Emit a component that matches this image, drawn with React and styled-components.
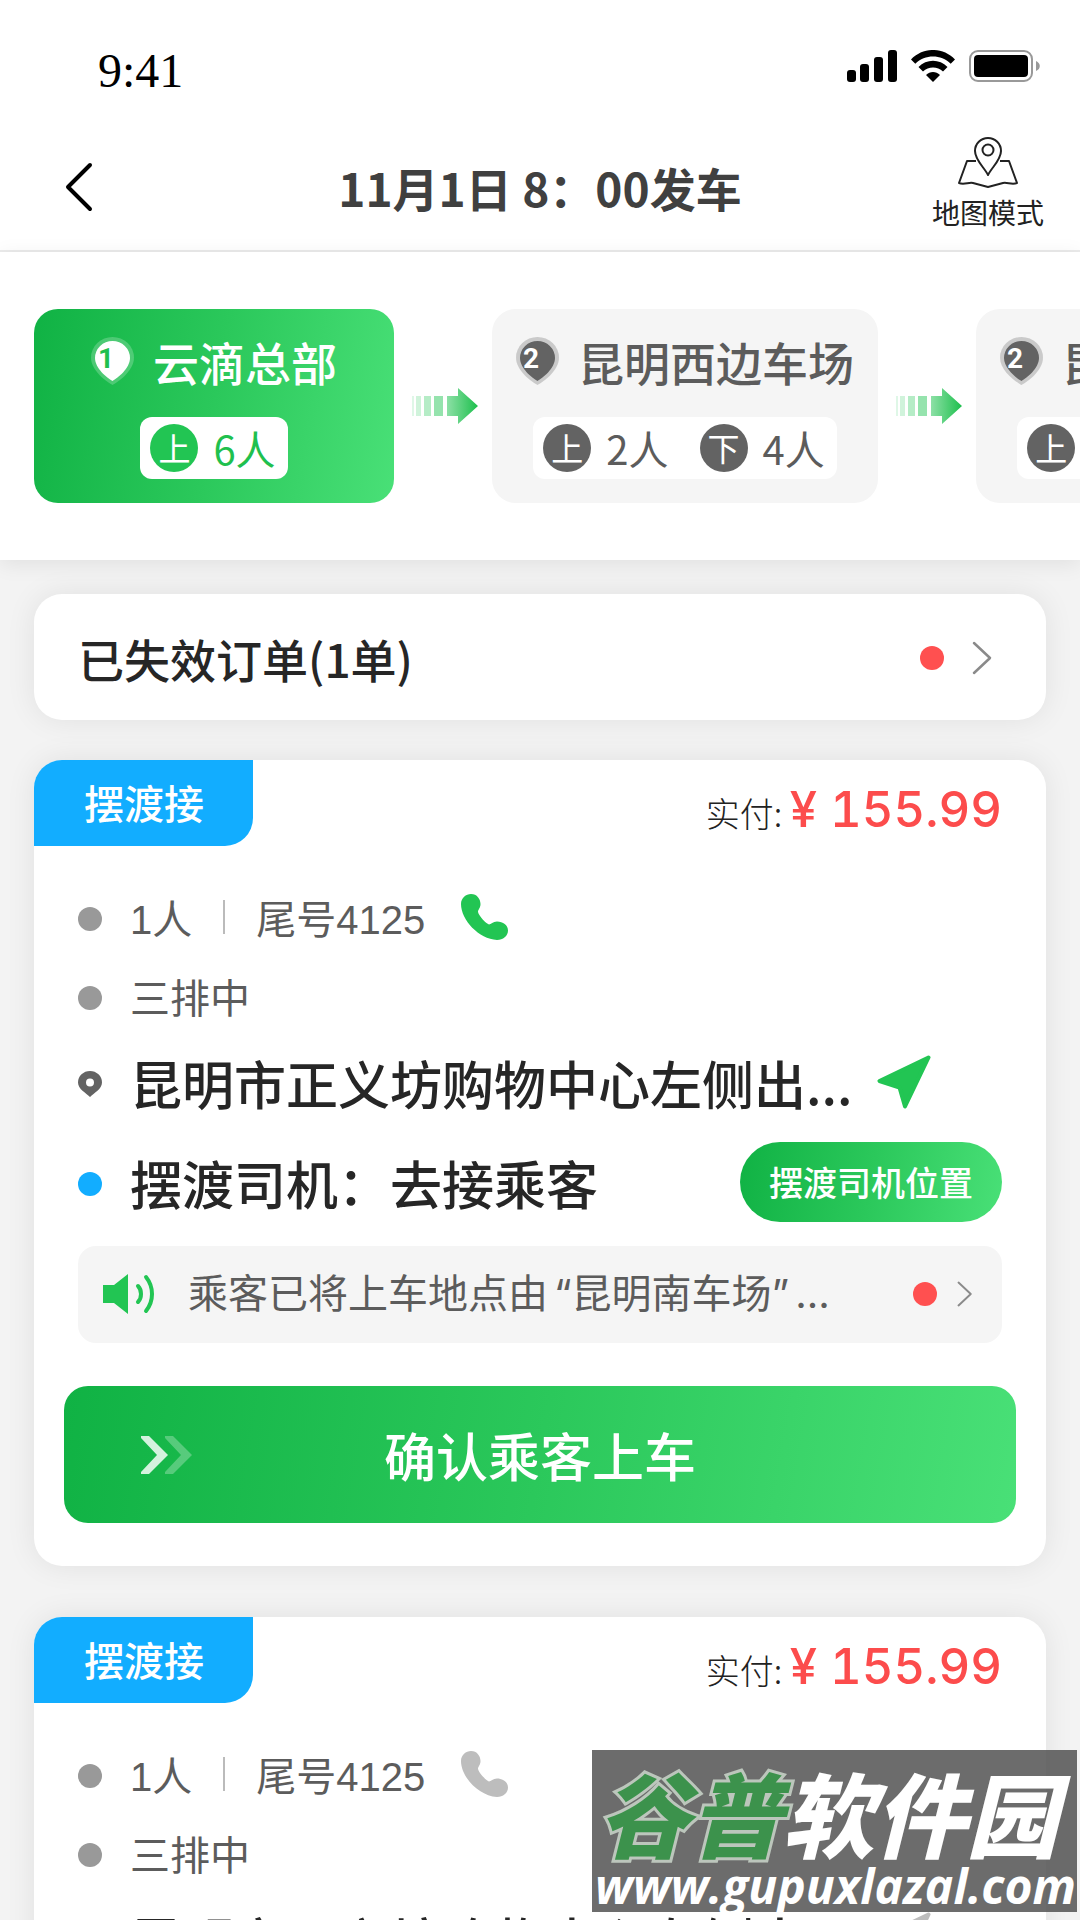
import React from "react";
import styled, { createGlobalStyle } from "styled-components";

const stops = [
  { no: 1, name: "云滴总部", active: true, counts: [["上", "6人"]] },
  { no: 2, name: "昆明西边车场", counts: [["上", "2人"], ["下", "4人"]] },
  { no: 2, name: "昆明西边车场", counts: [["上", "2人"], ["下", "4人"]] },
];

const orders = [
  { id: 1, callable: true },
  { id: 2, callable: false },
];

const SignalIcon = () => (
  <svg width="50" height="32" viewBox="0 0 50 32">
    <rect x="0" y="20" width="9" height="12" rx="3" />
    <rect x="13" y="14" width="9" height="18" rx="3" />
    <rect x="27" y="7" width="9" height="25" rx="3" />
    <rect x="41" y="0" width="9" height="32" rx="3" />
  </svg>
);

const WifiIcon = () => (
  <svg width="44" height="32" viewBox="0 0 44 32">
    <path d="M0 9.5C12-3.2 32-3.2 44 9.5L39.7 13.8C30 4.2 14 4.2 4.3 13.8Z" />
    <path d="M7.5 17C15.5 8.8 28.5 8.8 36.5 17L32 21.6C26.5 16 17.5 16 12 21.6Z" />
    <path d="M15 25C19 21 25 21 29 25L22 32Z" />
  </svg>
);

const BatteryIcon = () => (
  <svg width="71" height="32" viewBox="0 0 71 32">
    <rect x="1" y="1" width="62" height="30" rx="8" fill="none" stroke="#999" strokeWidth="2" />
    <rect x="5" y="5" width="54" height="22" rx="4" />
    <path d="M67 11C72 13 72 19 67 21Z" fill="#999" />
  </svg>
);

const BackIcon = () => (
  <svg width="28" height="50" viewBox="0 0 28 50" fill="none" stroke="#000" strokeWidth="4" strokeLinecap="round" strokeLinejoin="round">
    <path d="M25 3L3 25L25 47" />
  </svg>
);

const MapIcon = () => (
  <svg width="60" height="52" viewBox="0 0 60 52" fill="none" stroke="#222" strokeWidth="2" strokeLinejoin="round">
    <path d="M18 24H9L1 46C6 48 11 45 15 46L30 50L45 46C49 45 54 48 59 46L51 24H42" />
    <path d="M30 38C26 30 17 23 17 14A13 13 0 0 1 43 14C43 23 34 30 30 38Z" />
    <circle cx="30" cy="13" r="5.5" />
  </svg>
);

const StopPin = ({ no, active }) => (
  <svg width="43" height="48" viewBox="0 0 43 48">
    <path
      d="M21.500 48C16 45 0 34 0 20.500A21.500 20.500 0 0 1 43 20.500C43 34 27 45 21.500 48Z"
      fill={active ? "#fff" : "#666"}
      opacity={active ? 0.22 : 0.3}
    />
    <path
      d="M21.500 44C16 41 4 31 4 21A17.500 17 0 0 1 39 21C39 31 27 41 21.500 44Z"
      fill={active ? "#fff" : "#636363"}
    />
    <text x="7" y="31" fontFamily="Roboto, sans-serif" fontSize="28" fontWeight="700" fill={active ? "#1fc04e" : "#fff"}>
      {no}
    </text>
  </svg>
);

const NextArrow = () => (
  <svg width="70" height="36" viewBox="-4 0 70 36">
    <defs>
      <linearGradient id="next-fade">
        <stop offset="0" stopColor="#8de0a6" />
        <stop offset="1" stopColor="#1cbf4c" />
      </linearGradient>
    </defs>
    <g fill="#2bc85b">
      <rect x="0" y="8" width="2" height="20" opacity="0.15" />
      <rect x="4" y="8" width="5" height="20" opacity="0.22" />
      <rect x="12" y="8" width="7" height="20" opacity="0.35" />
      <rect x="22" y="8" width="9" height="20" opacity="0.5" />
    </g>
    <path d="M35 8H46V0L66 18L46 36V28H35Z" fill="url(#next-fade)" />
  </svg>
);

const ChevronRight = ({ h = 34 }) => (
  <svg height={h} viewBox="0 0 20 34" fill="none" stroke="#8a8a8a" strokeWidth="2.500" strokeLinecap="round" strokeLinejoin="round">
    <path d="M2 2L18 17L2 32" />
  </svg>
);

const PhoneIcon = ({ color }) => (
  <svg width="47" height="46" viewBox="0 0 47 46">
    <path
      fill={color}
      d="M0 10C0 4 5 0 10 0C16 0 19.500 5 19.500 10C19.500 14 17 15.500 17 18C18 22 25 29.500 28 30.500C30 30.500 32 27.500 36 27.500C42 27.500 47 31 47 36.500C47 42 42 46 36 46C18 45 0 26 0 10Z"
    />
  </svg>
);

const SmallPin = () => (
  <svg width="24" height="26" viewBox="0 0 24 26">
    <path
      fill="#636363"
      fillRule="evenodd"
      d="M12 26C8 22 0 18 0 11.500A12 11.500 0 0 1 24 11.500C24 18 16 22 12 26ZM12 7.500A4 4 0 1 0 12 15.500A4 4 0 1 0 12 7.500Z"
    />
  </svg>
);

const NavIcon = ({ color }) => (
  <svg width="54" height="54" viewBox="0 0 54 54">
    <path d="M51.500 2.500L2.500 26L22.500 32.500L28 51.500Z" fill={color} stroke={color} strokeWidth="4" strokeLinejoin="round" />
  </svg>
);

const SpeakerIcon = () => (
  <svg width="54" height="40" viewBox="0 0 54 40" fill="none" stroke="#22c553" strokeLinecap="round">
    <path d="M1 11H12L26 0V40L12 29H1Z" fill="#22c553" stroke="none" />
    <path d="M36 12C40 16 40 24 36 28" strokeWidth="4" />
    <path d="M44 3C52 13 52 27 44 37" strokeWidth="4" />
  </svg>
);

const DoubleChevron = () => (
  <svg width="52" height="38" viewBox="0 0 52 38" fill="#fff">
    <path opacity="0.82" d="M0 0H8L27 19L8 38H0V36L16 19L0 2Z" />
    <path opacity="0.28" d="M24 0H32L51 19L32 38H24V36L40 19L24 2Z" />
  </svg>
);

const Stop = ({ stop }) => (
  <StopCard $active={stop.active}>
    <StopTitle>
      <StopPin no={stop.no} active={stop.active} />
      {stop.name}
    </StopTitle>
    <Counts $active={stop.active}>
      {stop.counts.map(([kind, count]) => (
        <Count key={kind}>
          <Kind $active={stop.active}>{kind}</Kind>
          {count}
        </Count>
      ))}
    </Counts>
  </StopCard>
);

const Order = ({ callable }) => {
  const tint = callable ? "#22c553" : "#bdbdbd";
  return (
    <Card as="article">
      <OrderHead>
        <Tag>摆渡接</Tag>
        <Paid>
          实付: <Price>¥ 155.99</Price>
        </Paid>
      </OrderHead>
      <Rows>
        <Row $h={78}>
          <Marker><Dot $color="#999" /></Marker>
          1人
          <Divider />
          尾号4125
          <IconButton $gap={36} aria-label="拨打电话" disabled={!callable}>
            <PhoneIcon color={tint} />
          </IconButton>
        </Row>
        <Row $h={80}>
          <Marker><Dot $color="#999" /></Marker>
          三排中
        </Row>
        <PlaceRow $h={92}>
          <Marker><SmallPin /></Marker>
          昆明市正义坊购物中心左侧出...
          <IconButton $gap={24} aria-label="导航" disabled={!callable}>
            <NavIcon color={tint} />
          </IconButton>
        </PlaceRow>
        <PlaceRow $h={108}>
          <Marker><Dot $color="#12adff" /></Marker>
          摆渡司机：去接乘客
          <DriverButton>摆渡司机位置</DriverButton>
        </PlaceRow>
        <Notice href="#notice">
          <SpeakerIcon />
          <NoticeText>
            乘客已将上车地点由<Quoted>“昆明南车场”</Quoted>...
          </NoticeText>
          <Dot $color="#ff5050" />
          <ChevronRight h={26} />
        </Notice>
      </Rows>
      <ConfirmButton>
        <DoubleChevron />
        <span>确认乘客上车</span>
      </ConfirmButton>
    </Card>
  );
};

const App = () => (
  <Screen>
    <GlobalStyle />
    <StatusBar>
      <Clock>9:41</Clock>
      <StatusIcons>
        <SignalIcon />
        <WifiIcon />
        <BatteryIcon />
      </StatusIcons>
    </StatusBar>
    <NavBar>
      <BackButton aria-label="返回">
        <BackIcon />
      </BackButton>
      <Title>11月1日 8：00发车</Title>
      <MapButton>
        <MapIcon />
        地图模式
      </MapButton>
    </NavBar>
    <Stops>
      {stops.map((stop, i) => (
        <React.Fragment key={i}>
          {i > 0 && <NextArrow />}
          <Stop stop={stop} />
        </React.Fragment>
      ))}
    </Stops>
    <Content>
      <Expired href="#expired">
        <ExpiredText>已失效订单(1单)</ExpiredText>
        <Dot $color="#ff5050" />
        <ChevronRight />
      </Expired>
      <OrderList>
        {orders.map((o) => (
          <Order key={o.id} callable={o.callable} />
        ))}
      </OrderList>
    </Content>
    <Watermark>
      <Brand>
        <em>谷普</em>软件园
      </Brand>
      <Site>www.gupuxlazal.com</Site>
    </Watermark>
  </Screen>
);

const GlobalStyle = createGlobalStyle`
  * {
    box-sizing: border-box;
  }

  body {
    margin: 0;
    font-family: "Noto Sans CJK SC", sans-serif;
    background: #f3f3f3;
  }

  button {
    padding: 0;
    border: none;
    background: none;
    font-family: inherit;
    color: inherit;
  }

  a {
    color: inherit;
    text-decoration: none;
  }

  svg {
    display: block;
    flex: none;
  }
`;

const green = "linear-gradient(100deg, #10b244 0%, #2bc85b 50%, #49e077 100%)";

const Screen = styled.div`
  position: relative;
  display: flex;
  flex-direction: column;
  height: 100vh;
  overflow: hidden;
`;

const StatusBar = styled.div`
  display: flex;
  flex: none;
  justify-content: space-between;
  align-items: flex-start;
  height: 124px;
  padding: 50px 40px 0 98px;
  background: #fff;
`;

const Clock = styled.time`
  font-family: "Liberation Serif", serif;
  font-size: 48px;
  line-height: 42px;
  color: #000;
`;

const StatusIcons = styled.div`
  display: flex;
  gap: 14px;
`;

const NavBar = styled.header`
  display: grid;
  flex: none;
  grid-template-columns: 1fr auto 1fr;
  align-items: center;
  height: 128px;
  padding: 0 36px;
  background: #fff;
  border-bottom: 2px solid #ebebeb;
`;

const BackButton = styled.button`
  justify-self: start;
  padding-left: 29px;
`;

const Title = styled.h1`
  margin: 0;
  font-size: 46px;
  font-weight: 700;
  line-height: 60px;
  color: #404040;
`;

const MapButton = styled.button`
  display: flex;
  flex-direction: column;
  align-items: center;
  justify-self: end;
  gap: 3px;
  padding-bottom: 6px;
  font-size: 28px;
  line-height: 40px;
  color: #222;
`;

const Stops = styled.section`
  display: flex;
  flex: none;
  align-items: center;
  gap: 14px;
  padding: 57px 34px;
  overflow: hidden;
  background: #fff;
  box-shadow: 0 4px 20px rgba(0, 0, 0, 0.08);
`;

const StopCard = styled.div`
  display: flex;
  flex: none;
  flex-direction: column;
  align-items: center;
  gap: 24px;
  min-width: 360px;
  padding: 20px 24px 24px;
  border-radius: 24px;
  background: ${(p) => (p.$active ? green : "#f5f5f5")};
  color: ${(p) => (p.$active ? "#fff" : "#5c5c5c")};
`;

const StopTitle = styled.div`
  display: flex;
  align-items: center;
  gap: 19px;
  font-size: 46px;
  font-weight: 500;
  line-height: 64px;
`;

const Counts = styled.div`
  display: flex;
  gap: 31px;
  padding: 7px 12px 7px 10px;
  border-radius: 12px;
  background: #fff;
  color: ${(p) => (p.$active ? "#1fc04e" : "#5c5c5c")};
`;

const Count = styled.div`
  display: flex;
  align-items: center;
  gap: 15px;
  font-size: 40px;
  line-height: 48px;
`;

const Kind = styled.span`
  width: 48px;
  height: 48px;
  border-radius: 50%;
  background: ${(p) => (p.$active ? "#22c553" : "#636363")};
  color: #fff;
  font-size: 32px;
  line-height: 46px;
  text-align: center;
`;

const Content = styled.main`
  flex: 1;
  min-height: 0;
  padding: 34px 34px 0;
`;

const Card = styled.div`
  border-radius: 28px;
  background: #fff;
  box-shadow: 0 0 30px rgba(0, 0, 0, 0.08);
`;

const Dot = styled.i`
  flex: none;
  width: 24px;
  height: 24px;
  border-radius: 50%;
  background: ${(p) => p.$color};
`;

const Expired = styled(Card).attrs({ as: "a" })`
  display: flex;
  align-items: center;
  gap: 28px;
  margin-bottom: 40px;
  padding: 32px 54px 30px 44px;
`;

const ExpiredText = styled.span`
  flex: 1;
  font-size: 46px;
  font-weight: 500;
  line-height: 64px;
  color: #262626;
`;

const OrderList = styled.div`
  display: flex;
  flex-direction: column;
  gap: 51px;
`;

const OrderHead = styled.div`
  display: flex;
  justify-content: space-between;
`;

const Tag = styled.span`
  padding: 12px 49px 14px 50px;
  border-radius: 28px 0;
  background: #12adff;
  color: #fff;
  font-size: 40px;
  font-weight: 500;
  line-height: 60px;
`;

const Paid = styled.div`
  padding: 20px 44px 0 0;
  font-size: 34px;
  font-weight: 300;
  line-height: 60px;
  color: #222;
`;

const Price = styled.span`
  font-family: Inter, sans-serif;
  font-size: 49px;
  font-weight: 500;
  font-variant-numeric: tabular-nums;
  color: #fc4c4c;
`;

const Rows = styled.div`
  padding: 32px 44px 43px;
`;

const Row = styled.div`
  display: flex;
  align-items: center;
  height: ${(p) => p.$h}px;
  font-family: "Liberation Sans", "Noto Sans CJK SC", sans-serif;
  font-size: 40px;
  color: #5c5c5c;
  white-space: nowrap;
`;

const PlaceRow = styled(Row)`
  font-family: "Noto Sans CJK SC", sans-serif;
  font-size: 52px;
  font-weight: 500;
  color: #262626;
`;

const Marker = styled.span`
  display: flex;
  flex: none;
  width: 52px;
  padding-top: 4px;
`;

const Divider = styled.i`
  width: 2px;
  height: 34px;
  margin: 0 31px;
  background: #bbb;
`;

const IconButton = styled.button`
  margin-left: ${(p) => p.$gap}px;
`;

const DriverButton = styled.button`
  margin-left: auto;
  padding: 0 29px;
  border-radius: 40px;
  background: ${green};
  color: #fff;
  font-size: 34px;
  font-weight: 500;
  line-height: 80px;
`;

const Notice = styled.a`
  display: flex;
  align-items: center;
  gap: 20px;
  margin-top: 10px;
  padding: 18px 30px 19px 24px;
  border-radius: 18px;
  background: #f5f5f5;
`;

const NoticeText = styled.span`
  flex: 1;
  padding-left: 12px;
  font-family: Inter, "Noto Sans CJK SC", sans-serif;
  font-size: 40px;
  line-height: 60px;
  color: #5c5c5c;
  white-space: nowrap;
`;

const Quoted = styled.span`
  margin: 0 6px;
`;

const ConfirmButton = styled.button`
  display: grid;
  grid-template-columns: 1fr auto 1fr;
  align-items: center;
  width: calc(100% - 60px);
  height: 137px;
  margin: 0 30px 43px;
  padding: 0 77px;
  border-radius: 24px;
  background: ${green};
  color: #fff;
  font-size: 52px;
  font-weight: 500;
`;

const Watermark = styled.aside`
  position: absolute;
  right: 3px;
  bottom: 8px;
  padding: 12px 1px 0 3px;
  background: rgba(84, 84, 84, 0.86);
  color: #fff;
  font-style: italic;
  white-space: nowrap;
`;

const Brand = styled.div`
  padding-left: 3px;
  font-size: 92px;
  font-weight: 900;
  line-height: 98px;

  em {
    color: #3c924c;
    -webkit-text-stroke: 6px #bcc6bc;
    paint-order: stroke fill;
  }
`;

const Site = styled.div`
  font-family: "Open Sans", sans-serif;
  font-size: 48px;
  font-weight: 700;
  line-height: 52px;
`;

export default App;
